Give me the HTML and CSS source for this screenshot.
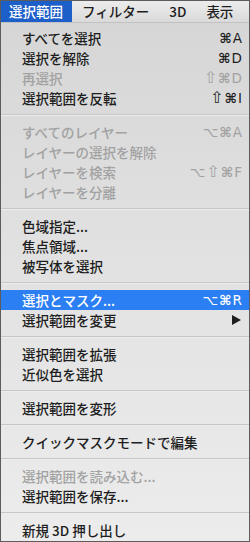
FILE: index.html
```html
<!DOCTYPE html>
<html lang="ja">
<head>
    <meta charset="UTF-8">
    <title>選択範囲メニュー</title>
    <link rel="stylesheet" href="styles.css">
</head>
<body>
    <div class="screen">
        <div class="menubar">
            <span class="bar-item active">選択範囲</span>
            <span class="bar-item">フィルター</span>
            <span class="bar-item">3D</span>
            <span class="bar-item">表示</span>
        </div>

        <ul class="menu">
            <li class="item"><span>すべてを選択</span><span class="key"><b>⌘</b>A</span></li>
            <li class="item"><span>選択を解除</span><span class="key"><b>⌘</b>D</span></li>
            <li class="item off"><span>再選択</span><span class="key"><span class="shift">⇧</span><b>⌘</b>D</span></li>
            <li class="item"><span>選択範囲を反転</span><span class="key"><span class="shift">⇧</span><b>⌘</b>I</span></li>
            <li class="sep"></li>
            <li class="item off"><span>すべてのレイヤー</span><span class="key">⌥<b>⌘</b>A</span></li>
            <li class="item off"><span>レイヤーの選択を解除</span></li>
            <li class="item off"><span>レイヤーを検索</span><span class="key">⌥<span class="shift">⇧</span><b>⌘</b>F</span></li>
            <li class="item off"><span>レイヤーを分離</span></li>
            <li class="sep"></li>
            <li class="item"><span>色域指定...</span></li>
            <li class="item"><span>焦点領域...</span></li>
            <li class="item"><span>被写体を選択</span></li>
            <li class="sep"></li>
            <li class="item selected"><span>選択とマスク...</span><span class="key">⌥<b>⌘</b>R</span></li>
            <li class="item"><span>選択範囲を変更</span><span class="arrow"></span></li>
            <li class="sep"></li>
            <li class="item"><span>選択範囲を拡張</span></li>
            <li class="item"><span>近似色を選択</span></li>
            <li class="sep"></li>
            <li class="item"><span>選択範囲を変形</span></li>
            <li class="sep"></li>
            <li class="item"><span>クイックマスクモードで編集</span></li>
            <li class="sep"></li>
            <li class="item off"><span>選択範囲を読み込む...</span></li>
            <li class="item"><span>選択範囲を保存...</span></li>
            <li class="sep"></li>
            <li class="item"><span>新規 3D 押し出し</span></li>
        </ul>
    </div>
</body>
</html>
```

FILE: styles.css
```css
body {
    margin: 0;
    font-family: "Noto Sans CJK JP", "Noto Sans", sans-serif;
    color: #1e1e1e;
}

.screen {
    box-sizing: border-box;
    width: 250px;
    height: 542px;
    border: 1px solid #5c5c5c;
    overflow: hidden;
    display: flex;
    flex-direction: column;
    background: linear-gradient(#d5d5d5, #e2e2e2 50%, #ececec);
}

.menubar {
    display: flex;
    height: 21px;
    align-items: stretch;
    background: linear-gradient(#ececec, #dadada);
    border-bottom: 1px solid #c2c2c2;
    font-size: 13.5px;
    font-weight: 500;
    line-height: 21px;
}

.bar-item {
    padding: 0 10px;
}

.bar-item.active {
    padding: 0 9px 0 8px;
    background-color: #1d5fc9;
    color: #fff;
}

.menu {
    list-style: none;
    margin: 0;
    padding: 5px 0 0;
}

.item {
    display: flex;
    justify-content: space-between;
    align-items: center;
    height: 20px;
    padding: 0 7px 0 21px;
    font-size: 13.5px;
    font-weight: 500;
    line-height: 20px;
}

.item.off {
    color: #a2a2a2;
}

.item.selected {
    background-color: #2c7ff3;
    color: #fff;
}

.key {
    font-family: "DejaVu Sans", sans-serif;
    font-size: 13.5px;
    font-weight: normal;
    letter-spacing: 1px;
    margin-right: -1px;
}

.key b {
    font-weight: bold;
}

.shift {
    font-size: 16px;
    line-height: 1;
}

.arrow {
    width: 0;
    height: 0;
    margin-right: 1px;
    border-top: 5px solid transparent;
    border-bottom: 5px solid transparent;
    border-left: 9px solid #1e1e1e;
}

.sep {
    height: 14px;
    display: flex;
    flex-direction: column;
    justify-content: center;
}

.sep::after {
    content: "";
    display: block;
    height: 1px;
    background-color: #c6c6c6;
    border-bottom: 1px solid #ededed;
}
```
